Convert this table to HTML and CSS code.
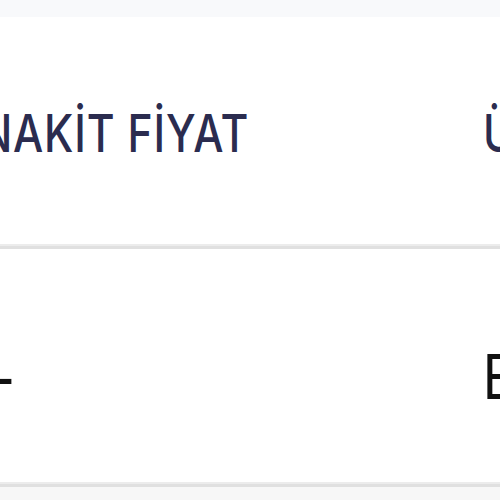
FILE: index.html
```html
<!DOCTYPE html>
<html lang="tr">
<head>
<meta charset="utf-8">
<title>Fiyat tablosu</title>
<link rel="stylesheet" href="styles.css">
</head>
<body>
<div class="page">
  <div class="topband"></div>
  <div class="row head">
    <div class="cell"><span class="txt h">NAKİT FİYAT</span></div>
    <div class="cell"><span class="txt h">ÜRÜN</span></div>
  </div>
  <div class="rule"></div>
  <div class="row body-row">
    <div class="cell"><span class="txt b dash">-</span></div>
    <div class="cell"><span class="txt b">EFT</span></div>
  </div>
  <div class="rule"></div>
  <div class="foot"></div>
</div>
</body>
</html>
```
FILE: styles.css
```css
html, body {
  margin: 0;
  padding: 0;
  background: #ffffff;
  overflow: hidden;
}
.page {
  width: 500px;
  height: 500px;
  overflow: hidden;
}
.topband {
  height: 17px;
  background: #f8f9fb;
}
.row {
  display: grid;
  grid-template-columns: 503px 300px;
  margin-left: -20px;
  width: 803px;
}
.head {
  height: 227px;
}
.body-row {
  height: 233px;
}
.cell {
  white-space: nowrap;
}
.txt {
  display: inline-block;
  transform: scaleX(0.82);
  transform-origin: left top;
}
.h {
  font-family: Inter, "Noto Sans", sans-serif;
  font-weight: 500;
  font-size: 52px;
  line-height: 52px;
  color: #2b2c4f;
  letter-spacing: 1px;
  margin-top: 91px;
}
.b {
  font-family: "Liberation Sans", Arial, sans-serif;
  font-size: 65px;
  line-height: 65px;
  color: #111111;
  margin-top: 95px;
}
.dash {
  margin-left: 16px;
}
.rule {
  height: 5px;
  background: linear-gradient(#ececec 0 2px, #e0e0e0 2px 5px);
}
.foot {
  height: 13px;
  background: #f7f7f7;
}
```
